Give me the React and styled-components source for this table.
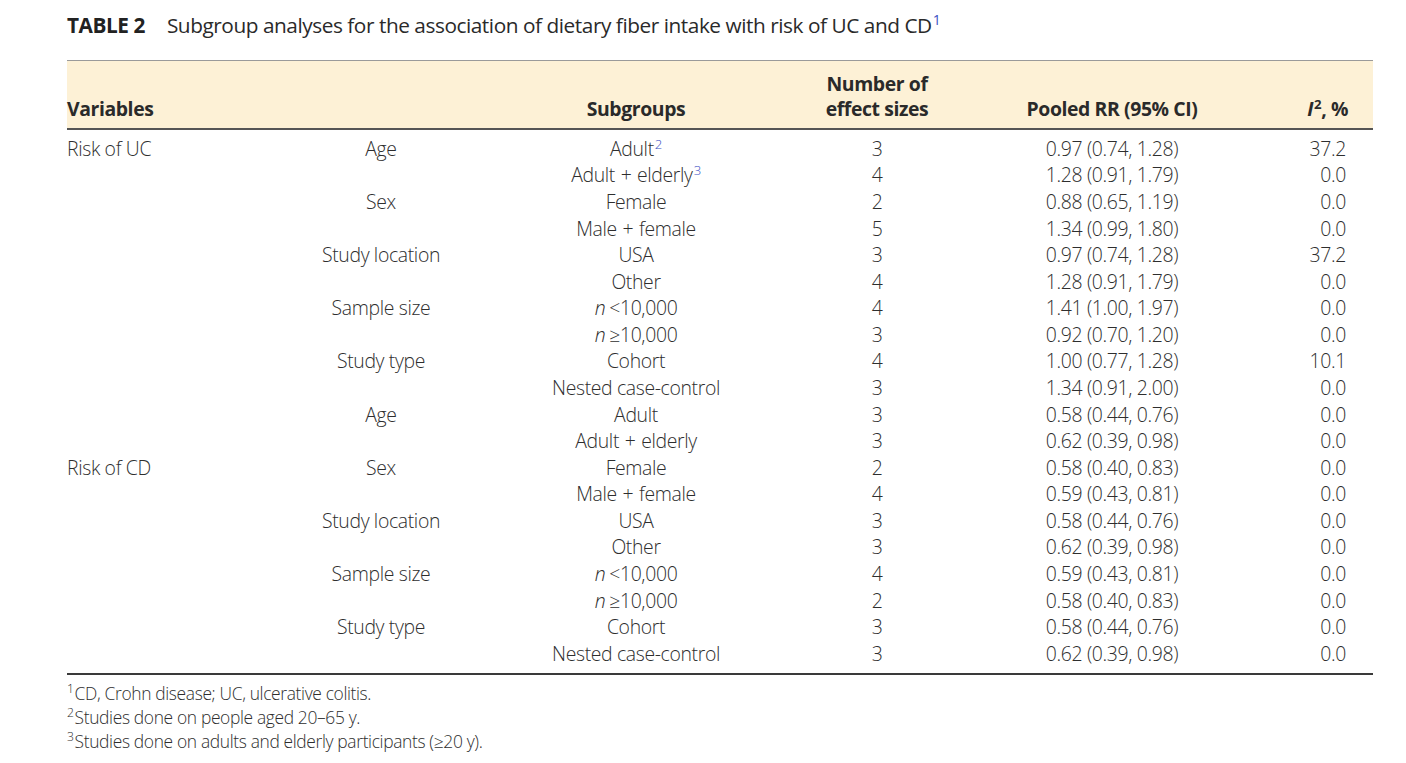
import React from "react";
import styled, { createGlobalStyle } from "styled-components";

const Global = createGlobalStyle`
  html, body { margin: 0; padding: 0; background: #fff; }
  body { font-family: "Open Sans", "Liberation Sans", sans-serif; color: #3c3c3c; }
  * { box-sizing: border-box; }
`;

const Page = styled.div`
  width: 1406px;
  height: 763px;
  padding: 10px 33px 0 67px;
`;

const Title = styled.h1`
  margin: 0;
  height: 30px;
  display: flex;
  align-items: center;
  gap: 22px;
  font-size: 20.8px;
  font-weight: 400;
  color: #2a2a2a;
  letter-spacing: -0.45px;
`;

const Label = styled.span`
  font-weight: 700;
  color: #222;
`;

const Sup = styled.sup`
  font-size: 0.68em;
  color: ${(p) => (p.$blue ? "#3b4fc4" : "inherit")};
  vertical-align: baseline;
  position: relative;
  top: -0.55em;
  margin-left: 1px;
  line-height: 0;
`;

const Plus = styled.span`
  margin: 0 1px;
`;

const Table = styled.div`
  margin-top: 20px;
  display: grid;
  grid-template-columns: 214px 200px 310px 172px 298px 112px;
  border-top: 1px solid #9a9a9a;
  border-bottom: 2px solid #3a3a3a;
`;

const HeadRow = styled.div`
  display: contents;
`;

const HeadCell = styled.div`
  background: #fdf1d6;
  height: 69px;
  border-bottom: 2px solid #555;
  display: flex;
  flex-direction: column;
  justify-content: flex-end;
  align-items: ${(p) => (p.$align === "left" ? "flex-start" : p.$align === "right" ? "flex-end" : "center")};
  padding: 0 ${(p) => (p.$align === "right" ? "25px" : "0")} 7px 0;
  font-size: 19.4px;
  font-weight: 700;
  color: #2a2a2a;
  line-height: 25px;
  letter-spacing: -0.4px;
  text-align: center;
`;

const Body = styled.div`
  grid-column: 1 / -1;
  display: grid;
  grid-template-columns: subgrid;
  padding: 5px 0 6px;
`;

const Cell = styled.div`
  height: 26.58px;
  display: flex;
  align-items: center;
  justify-content: ${(p) => (p.$align === "left" ? "flex-start" : p.$align === "right" ? "flex-end" : "center")};
  padding-right: ${(p) => (p.$align === "right" ? "27px" : "0")};
  font-size: 19.4px;
  font-weight: 300;
  color: #2e2e2e;
  white-space: pre;
  letter-spacing: -0.35px;
`;

const Ital = styled.i`
  font-style: italic;
  margin-right: 4px;
`;

const Notes = styled.div`
  padding-top: 6px;
  display: flex;
  flex-direction: column;
`;

const Note = styled.p`
  margin: 0;
  height: 24px;
  line-height: 24px;
  font-size: 17.4px;
  font-weight: 300;
  color: #2e2e2e;
  letter-spacing: -0.35px;
`;

const NoteSup = styled.sup`
  font-size: 0.7em;
  vertical-align: baseline;
  position: relative;
  top: -0.5em;
  margin-right: 1px;
  line-height: 0;
`;

const rows = [
  ["Risk of UC", "Age", { t: "Adult", s: "2" }, "3", "0.97 (0.74, 1.28)", "37.2"],
  ["", "", { a: "Adult", b: "elderly", s: "3" }, "4", "1.28 (0.91, 1.79)", "0.0"],
  ["", "Sex", { t: "Female" }, "2", "0.88 (0.65, 1.19)", "0.0"],
  ["", "", { a: "Male", b: "female" }, "5", "1.34 (0.99, 1.80)", "0.0"],
  ["", "Study location", { t: "USA" }, "3", "0.97 (0.74, 1.28)", "37.2"],
  ["", "", { t: "Other" }, "4", "1.28 (0.91, 1.79)", "0.0"],
  ["", "Sample size", { n: "<10,000" }, "4", "1.41 (1.00, 1.97)", "0.0"],
  ["", "", { n: "≥10,000" }, "3", "0.92 (0.70, 1.20)", "0.0"],
  ["", "Study type", { t: "Cohort" }, "4", "1.00 (0.77, 1.28)", "10.1"],
  ["", "", { t: "Nested case-control" }, "3", "1.34 (0.91, 2.00)", "0.0"],
  ["", "Age", { t: "Adult" }, "3", "0.58 (0.44, 0.76)", "0.0"],
  ["", "", { a: "Adult", b: "elderly" }, "3", "0.62 (0.39, 0.98)", "0.0"],
  ["Risk of CD", "Sex", { t: "Female" }, "2", "0.58 (0.40, 0.83)", "0.0"],
  ["", "", { a: "Male", b: "female" }, "4", "0.59 (0.43, 0.81)", "0.0"],
  ["", "Study location", { t: "USA" }, "3", "0.58 (0.44, 0.76)", "0.0"],
  ["", "", { t: "Other" }, "3", "0.62 (0.39, 0.98)", "0.0"],
  ["", "Sample size", { n: "<10,000" }, "4", "0.59 (0.43, 0.81)", "0.0"],
  ["", "", { n: "≥10,000" }, "2", "0.58 (0.40, 0.83)", "0.0"],
  ["", "Study type", { t: "Cohort" }, "3", "0.58 (0.44, 0.76)", "0.0"],
  ["", "", { t: "Nested case-control" }, "3", "0.62 (0.39, 0.98)", "0.0"],
];

function Sub({ v }) {
  if (v.n) {
    return (
      <span>
        <Ital>n</Ital>
        {v.n}
      </span>
    );
  }
  return (
    <span>
      {v.a ? (
        <>
          {v.a} <Plus>+</Plus> {v.b}
        </>
      ) : (
        v.t
      )}
      {v.s && <Sup $blue>{v.s}</Sup>}
    </span>
  );
}

export default function App() {
  return (
    <Page>
      <Global />
      <Title>
        <Label>TABLE 2</Label>
        <span>
          Subgroup analyses for the association of dietary fiber intake with risk of UC and CD
          <Sup $blue>1</Sup>
        </span>
      </Title>
      <Table>
        <HeadRow>
          <HeadCell $align="left">Variables</HeadCell>
          <HeadCell />
          <HeadCell>Subgroups</HeadCell>
          <HeadCell>
            <span>Number of</span>
            <span>effect sizes</span>
          </HeadCell>
          <HeadCell>Pooled RR (95% CI)</HeadCell>
          <HeadCell $align="right">
            <span>
              <i>I</i>
              <Sup>2</Sup>, %
            </span>
          </HeadCell>
        </HeadRow>
        <Body>
          {rows.map((r, i) => (
            <React.Fragment key={i}>
              <Cell $align="left">{r[0]}</Cell>
              <Cell>{r[1]}</Cell>
              <Cell>
                <Sub v={r[2]} />
              </Cell>
              <Cell>{r[3]}</Cell>
              <Cell>{r[4]}</Cell>
              <Cell $align="right">{r[5]}</Cell>
            </React.Fragment>
          ))}
        </Body>
      </Table>
      <Notes>
        <Note>
          <NoteSup>1</NoteSup>CD, Crohn disease; UC, ulcerative colitis.
        </Note>
        <Note>
          <NoteSup>2</NoteSup>Studies done on people aged 20–65 y.
        </Note>
        <Note>
          <NoteSup>3</NoteSup>Studies done on adults and elderly participants (≥20 y).
        </Note>
      </Notes>
    </Page>
  );
}
